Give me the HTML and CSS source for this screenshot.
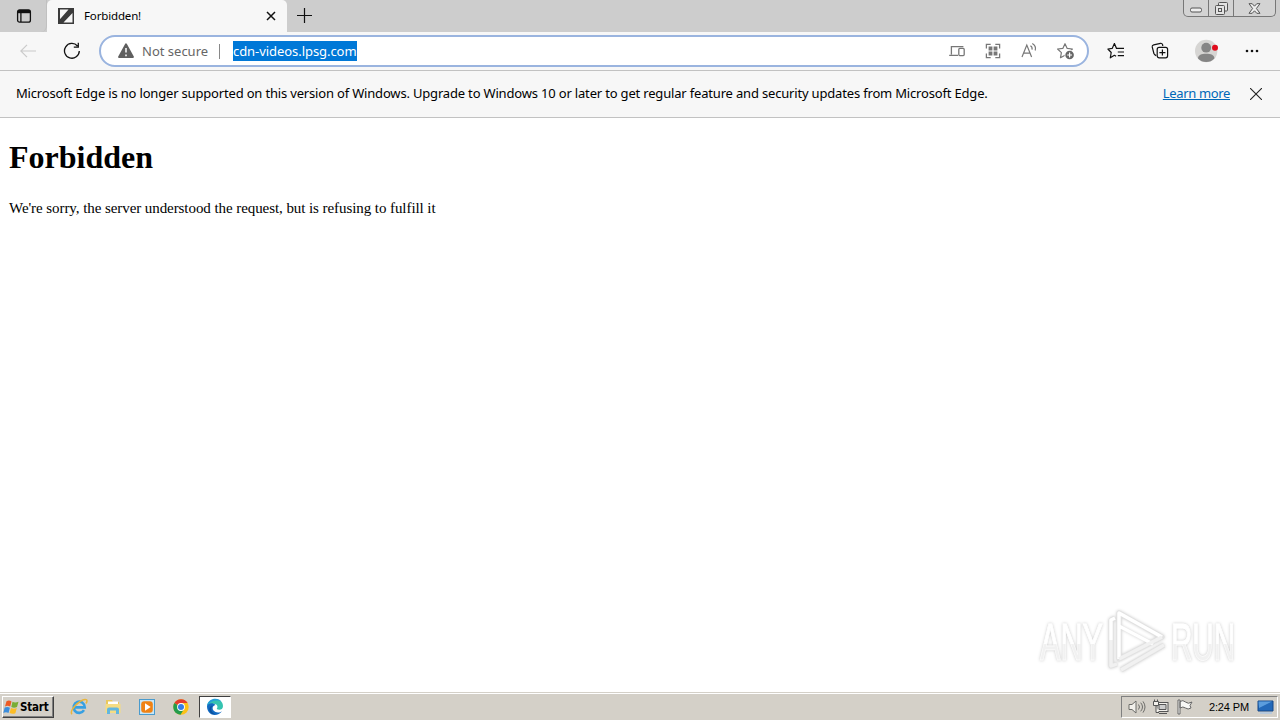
FILE: index.html
```html
<!DOCTYPE html>
<html lang="en">
<head>
<meta charset="utf-8">
<title>Forbidden!</title>
<link rel="stylesheet" href="styles.css">
</head>
<body>
<header class="tabstrip">
  <div class="tab-actions">
    <svg width="16" height="16" viewBox="0 0 16 16" fill="none" stroke="#111" stroke-width="1.3"><rect x="1.6" y="1.8" width="12.8" height="12.4" rx="2"/><path d="M2 3.6h12" stroke-width="3.2"/><path d="M4.9 4v10"/></svg>
  </div>
  <div class="tab">
    <svg class="favicon" width="16" height="16" viewBox="0 0 16 16"><path d="M0 0h16v16H0z" fill="#3b3b3b"/><path d="M2 1.5h8.5L2.6 10.5 2 11zM14.5 5v9.5H5.5z" fill="#f7f7f7"/><path d="M14 1.5 4 13" stroke="#3b3b3b" stroke-width="3"/></svg>
    <span class="tab-title">Forbidden!</span>
    <svg width="10" height="10" viewBox="0 0 10 10" stroke="#111" stroke-width="1.5"><path d="m1 1 8 8M9 1 1 9"/></svg>
  </div>
  <svg class="new-tab" width="15" height="15" viewBox="0 0 15 15" stroke="#111" stroke-width="1.2"><path d="M7.5 0v15M0 7.5h15"/></svg>
  <div class="caption">
    <div class="cap"><svg width="12" height="6" viewBox="0 0 12 6"><rect x=".5" y="1" width="11" height="4" rx="1.5" fill="#eee" stroke="#555"/></svg></div>
    <div class="cap"><svg width="13" height="13" viewBox="0 0 13 13" fill="#e3e3e3" stroke="#555"><rect x="3.5" y=".5" width="9" height="8.5" rx="1"/><rect x=".5" y="3.5" width="9" height="9" rx="1"/><rect x="3.5" y="6.5" width="3" height="3"/></svg></div>
    <div class="cap wide"><svg width="13" height="11" viewBox="0 0 13 11"><path d="M1 .7h3.2l2.3 2.5L8.8.7H12L8.4 5.5l3.6 4.8H8.8L6.5 7.8l-2.3 2.5H1l3.6-4.8z" fill="#eee" stroke="#555"/></svg></div>
  </div>
</header>
<nav class="toolbar">
  <svg class="back" width="16" height="14" viewBox="0 0 16 14" fill="none" stroke="#cacaca" stroke-width="1.2"><path d="M16 7H1M7 .8.8 7 7 13.2"/></svg>
  <svg class="reload" width="18" height="18" viewBox="0 0 18 18" fill="none" stroke="#111" stroke-width="1.3"><path d="M16.3 9A7.4 7.4 0 1 1 14.5 4M15.3.8v4.4h-4.5"/></svg>
  <div class="omnibox">
    <svg class="warn" width="16" height="16" viewBox="0 0 16 16"><path d="M8 1.2 15 14H1z" fill="#5f5f5f" stroke="#5f5f5f" stroke-width="1.8" stroke-linejoin="round"/><path d="M8 5v4.6M8 11.4v1.8" stroke="#fff" stroke-width="1.5"/></svg>
    <span class="security">Not secure</span>
    <span class="divider"></span>
    <span class="url">cdn-videos.lpsg.com</span>
    <div class="page-actions">
      <svg width="18" height="18" viewBox="0 0 18 18" fill="none" stroke="#777" stroke-width="1.3"><path d="M15.4 4.6H3.4v8M1.2 13.4H10"/><rect x="10.8" y="6.4" width="5.4" height="7.2" rx="1"/></svg>
      <svg width="18" height="18" viewBox="0 0 18 18" fill="none" stroke="#777" stroke-width="1.3"><path d="M2.4 6.6V2.3h4.3M11.3 2.3h4.3v4.3M15.6 11.4v4.3h-4.3M6.7 15.7H2.4v-4.3"/><path d="M4.6 4.6h3.8v3.8H4.6zM9.6 4.6h3.8v3.8H9.6zM4.6 9.6h3.8v3.8H4.6zM9.6 9.6h3.8v3.8H9.6z" fill="#777" stroke="none"/></svg>
      <svg width="18" height="18" viewBox="0 0 18 18" fill="none" stroke="#777" stroke-width="1.2"><path d="m2 15 4.8-12L11.6 15M3.6 11.2h6.5M10.4 3.7q2.2 1.2 1.6 4M12.3 1.5q4.2 2.4 2.9 7"/></svg>
      <svg width="20" height="18" viewBox="0 0 20 18"><path d="m9 1.7 2.2 4.7 5.2.6-3.8 3.6.9 5.1L9 13.2l-4.5 2.5.9-5.1L1.6 7l5.2-.6z" fill="none" stroke="#777" stroke-width="1.2" stroke-linejoin="round"/><circle cx="13.6" cy="13" r="5.1" fill="#fff"/><circle cx="13.6" cy="13" r="4.3" fill="#666"/><path d="M13.6 10.6v4.8M11.2 13H16" stroke="#fff" stroke-width="1.2"/></svg>
    </div>
  </div>
  <div class="tools">
    <svg width="18" height="18" viewBox="0 0 18 18" fill="none" stroke="#111" stroke-width="1.2" stroke-linejoin="round"><path d="M11 6.4H9.6L7.4 1.6 5.3 6.3.9 7l3.3 3.5-.9 5.3 4.1-2.5 1.7 1M7.4 1.6l2.1 4.8H17M10.8 10H17M10.8 13.6H17"/></svg>
    <svg width="18" height="18" viewBox="0 0 18 18" fill="none" stroke="#111" stroke-width="1.2"><path d="M5.2 13.6Q3.6 13 2.9 11.5L1.2 4.9Q1 3.2 2.7 2.8l6.8-1.5Q11 1 11.7 3v1"/><rect x="6.2" y="5.4" width="10.4" height="10.4" rx="2"/><path d="M11.4 7.6v6M8.4 10.6h6"/></svg>
    <svg width="24" height="24" viewBox="0 0 24 24"><circle cx="11.2" cy="12" r="11.2" fill="#d6d5d3"/><circle cx="11.2" cy="8.7" r="4.9" fill="#858585"/><path d="M3 19.4c0-3.2 3.5-4.6 8.2-4.6s8.2 1.4 8.2 4.6a11.2 11.2 0 0 1-16.4 0" fill="#858585"/><circle cx="20" cy="8.8" r="3" fill="#e00b1c"/></svg>
    <svg width="14" height="4" viewBox="0 0 14 4" fill="#111"><circle cx="2" cy="2" r="1.3"/><circle cx="7" cy="2" r="1.3"/><circle cx="12" cy="2" r="1.3"/></svg>
  </div>
</nav>
<section class="infobar">
  <span class="notice">Microsoft Edge is no longer supported on this version of Windows. Upgrade to Windows 10 or later to get regular feature and security updates from Microsoft Edge.</span>
  <a class="learn">Learn more</a>
  <svg width="12" height="12" viewBox="0 0 12 12" stroke="#222" stroke-width="1.1"><path d="m0 0 12 12M12 0 0 12"/></svg>
</section>
<main class="page">
  <h1 class="heading">Forbidden</h1>
  <p class="message">We're sorry, the server understood the request, but is refusing to fulfill it</p>
  <div class="watermark">
    <span class="mark any">ANY</span>
    <svg width="62" height="64" viewBox="0 0 62 64" fill="none" stroke-linejoin="round"><g stroke="#e2e2e2" stroke-width="5"><path d="M13 4v46L56 28zM9 9 5 11v46l6-2M15 61l43-25"/></g><g stroke="#fff" stroke-width="3.4"><path d="M13 50V4l43 24M9 9 5 11v20M13 17l34 18"/></g><path d="M13 50 56 28M5 31v26l6-2M15 61l43-25" stroke="#f1f1f1" stroke-width="3.4"/></svg>
    <span class="mark run">RUN</span>
  </div>
</main>
<footer class="taskbar">
  <div class="start">
    <svg width="17" height="17" viewBox="0 0 17 17"><path d="M3.5 2.3Q6 .8 8.5 2.4L7.2 7.6Q4.5 6 2 7.5z" fill="#ed5a24"/><path d="M9.5 2.8Q12 4.2 15.5 2.8L14 8Q11 9.3 8.3 8z" fill="#79ad35"/><path d="M1.7 8.6Q4.3 7.3 6.9 8.7L5.5 14Q3 12.5.3 14z" fill="#3b8ddc"/><path d="M8 9Q11 10.3 13.8 9l-1.4 5.2Q9.5 15.5 6.6 14z" fill="#fcbd26"/></svg>
    <span class="start-text">Start</span>
  </div>
  <div class="pins">
    <svg width="18" height="18" viewBox="0 0 18 18" fill="none"><path d="M14 12.2A5.6 5.6 0 1 1 14.8 9.4H5" stroke="#37a0e2" stroke-width="2.6"/><path d="M2 16.2C-1 13 9 2 15 1.4c3-.2 2 3 .8 4" stroke="#e9b53b" stroke-width="1.5"/></svg>
    <svg width="18" height="18" viewBox="0 0 18 18"><path d="M2 2h6l1 2h6v10H2z" fill="#e9c85d"/><path d="M4 3.5h10V8H4z" fill="#fff"/><path d="M1.5 6h15v9h-15z" fill="#f5dc83"/><path d="M3 16v-4.5q0-2 2-2h8q2 0 2 2V16h-3v-3.5H6V16z" fill="#62b6df"/></svg>
    <svg width="18" height="18" viewBox="0 0 18 18"><rect x="1.5" y="1.5" width="15" height="15" fill="#c8e6f6" stroke="#4a9bcd"/><rect x="3.2" y="3.2" width="11.6" height="11.6" rx="3" fill="#f08213"/><path d="m7 5.3 5.7 3.7L7 12.7z" fill="#fff"/></svg>
    <svg width="18" height="18" viewBox="0 0 18 18"><circle cx="9" cy="9" r="7.7" fill="#fbc116"/><path d="M9 9 2.3 5.1A7.7 7.7 0 0 1 15.7 5.1H9z" fill="#e33b2e"/><path d="M2.3 5.1A7.7 7.7 0 0 0 8.5 16.7L12 11z" fill="#249c4d"/><circle cx="9" cy="9" r="3.9" fill="#fff"/><circle cx="9" cy="9" r="3" fill="#347de8"/></svg>
  </div>
  <div class="active-app">
    <svg width="18" height="18" viewBox="0 0 18 18"><path d="M1 8C2-1 17-1 17 8c0 4-4 4.5-6.3 3 2-3-.3-5.2-3.2-5.2C4.6 5.8 2 7 1 8" fill="#35c3b0"/><path d="M1 8C2-.5 13-1 15.5 4 11 1 4 3 1 8" fill="#249fd8"/><path d="M1 8c1.5-3.5 6.5-3.7 8.5-1-3 .5-3.6 3.5-2 5.5 2 2.4 6 2.5 8.5.7C12 19 1 18.5 1 8" fill="#126ac2"/><path d="M6.5 7.5c-2.5 3-1.3 7 2.7 8.7-4 .6-6.5-2.8-5.7-6 .4-1.6 1.7-2.5 3-2.7" fill="#0d519c"/></svg>
  </div>
  <div class="tray">
    <svg width="18" height="16" viewBox="0 0 18 16" fill="#f2f0eb" stroke="#6c6c69"><path d="M1 5.5h3L8 2v12l-4-3.5H1z"/><path d="M10.5 5.5q2 2.5 0 5M12.7 3.7q3.6 4.3 0 8.6M15 2.4q4 5.6 0 11.2" fill="none"/></svg>
    <svg width="18" height="16" viewBox="0 0 18 16" fill="#f2f0eb" stroke="#555"><rect x="5" y="3.5" width="11" height="9"/><path d="M7 5.5h7v5H7z" fill="#ccc"/><path d="M7 14.5h8M1.5 2.5h5v4h-5zM2.5.5v2M5.5.5v2M4 6.5v7h3"/></svg>
    <svg width="18" height="16" viewBox="0 0 18 16" fill="#f8f8f6" stroke="#666"><path d="M2 1h2v14H2zM4 2.5q3-2 5.5.5T16 3l-2 3.5 1 2.5q-3 2-5.5 0T4 9z"/></svg>
    <span class="clock">2:24 PM</span>
    <svg width="17" height="14" viewBox="0 0 17 14"><path d="M1 1h15v10H1z" fill="#2369b9" stroke="#174887"/><path d="M1.5 1.5H15L2 8z" fill="#5b9ddd"/><path d="M3 13h12" stroke="#b7c9dc" stroke-width="2"/></svg>
  </div>
</footer>
</body>
</html>
```
FILE: styles.css
```css
* { box-sizing: border-box; }
body { margin: 0; width: 1280px; height: 720px; overflow: hidden; display: flex; flex-direction: column; background: #fff; color: #000; font-family: "Noto Sans", "Open Sans", sans-serif; }
svg { display: block; flex: none; }
span, a { white-space: nowrap; }
.tabstrip { height: 32px; flex: none; display: flex; align-items: flex-start; background: #cdcdcd; }
.tab-actions { width: 47px; height: 32px; padding: 8px 0 0 16px; background: #cdcdcd; border-right: 1px solid #c0c0c0; border-bottom-right-radius: 6px; }
.tab { width: 240px; height: 32px; display: flex; align-items: center; padding: 0 11px; background: #f7f7f7; border-radius: 5px 5px 0 0; }
.tab-title { margin-left: 10px; flex: 1; font-size: 11.5px; line-height: 16px; letter-spacing: -.15px; }
.new-tab { margin: 8px 0 0 10px; }
.caption { margin-left: auto; margin-right: 4px; width: 93px; height: 17px; display: flex; border: 1px solid #777; border-top: 0; border-radius: 0 0 5px 5px; background: #d3d3d3; }
.cap { width: 25px; display: flex; justify-content: center; align-items: center; border-right: 1px solid #777; }
.cap:first-child { padding-top: 4px; }
.cap.wide { flex: 1; border: 0; }
.toolbar { height: 39px; flex: none; display: flex; align-items: center; background: #f7f7f7; border-bottom: 1px solid #c2c2c2; padding-left: 20px; }
.reload { margin-left: 27px; }
.omnibox { margin-left: 18px; width: 990px; height: 32px; display: flex; align-items: center; border: 2px solid #9ab4df; border-radius: 16px; background: #fff; padding: 0 11px 0 17px; }
.security { margin-left: 8px; width: 67px; font-size: 13px; color: #666; }
.divider { margin-left: 10px; width: 1px; height: 15px; background: #888; }
.url { margin-left: 13px; height: 20px; width: 124px; background: #0078d7; color: #fff; font-size: 13px; line-height: 20px; letter-spacing: -.06px; }
.page-actions { margin-left: auto; display: flex; gap: 18px; }
.tools { flex: 1; display: flex; align-items: center; padding: 0 21px 0 18px; justify-content: space-between; }
.infobar { height: 47px; flex: none; display: flex; align-items: center; padding: 0 18px 0 16px; background: #f7f7f7; border-bottom: 1px solid #c2c2c2; font-size: 13px; }
.notice { letter-spacing: -.177px; padding-bottom: 2px; }
.learn { margin-left: auto; margin-right: 20px; padding-bottom: 2px; color: #0067b8; text-decoration: underline; letter-spacing: -.35px; }
.page { flex: 1; padding: 21px 8px 0 9px; display: flex; flex-direction: column; font-family: "Liberation Serif", serif; }
.heading { margin: 0; font-size: 32px; line-height: 36px; font-weight: bold; }
.message { margin: 24px 0 0; font-size: 15px; line-height: 18px; letter-spacing: -.072px; }
.watermark { margin: auto 37px 19px auto; display: flex; align-items: center; gap: 3px; filter: drop-shadow(0 0 1.5px #ccc); }
.mark { font: 51px/56px "Liberation Sans", sans-serif; color: transparent; background: linear-gradient(#fff 52%, #f1f1f1 52%); background-clip: text; -webkit-background-clip: text; -webkit-text-stroke: 1px #ffffffb0; transform-origin: left; }
.any { width: 105px; margin-right: -42px; transform: translateY(2px) scaleX(.6); }
.run { width: 111px; margin-right: -47px; transform: translateY(2px) scaleX(.58); }
.taskbar { height: 28px; flex: none; display: flex; align-items: center; background: #d4d0c8; border-top: 1px solid #d4d0c8; box-shadow: inset 0 1px #fff; padding: 1px 2px 0; }
.start { width: 52px; height: 22px; display: flex; align-items: center; border: 1px solid; border-color: #fff #404040 #404040 #fff; box-shadow: inset -1px -1px #808080; }
.start-text { font: bold 11.5px/16px "DejaVu Sans Condensed", "DejaVu Sans", sans-serif; letter-spacing: -.2px; }
.pins { margin-left: 16px; display: flex; gap: 16px; }
.active-app { margin-left: 9px; width: 32px; height: 22px; display: flex; align-items: center; justify-content: center; background: #fff; border: 1px solid; border-color: #404040 #fff #fff #404040; }
.tray { margin-left: auto; width: 157px; height: 22px; display: flex; align-items: center; padding-left: 6px; gap: 6px; border: 1px solid; border-color: #808080 #fff #fff #808080; }
.clock { font: 11px/16px "Liberation Sans", sans-serif; width: 42px; margin-left: 9px; letter-spacing: -.15px; }
```
